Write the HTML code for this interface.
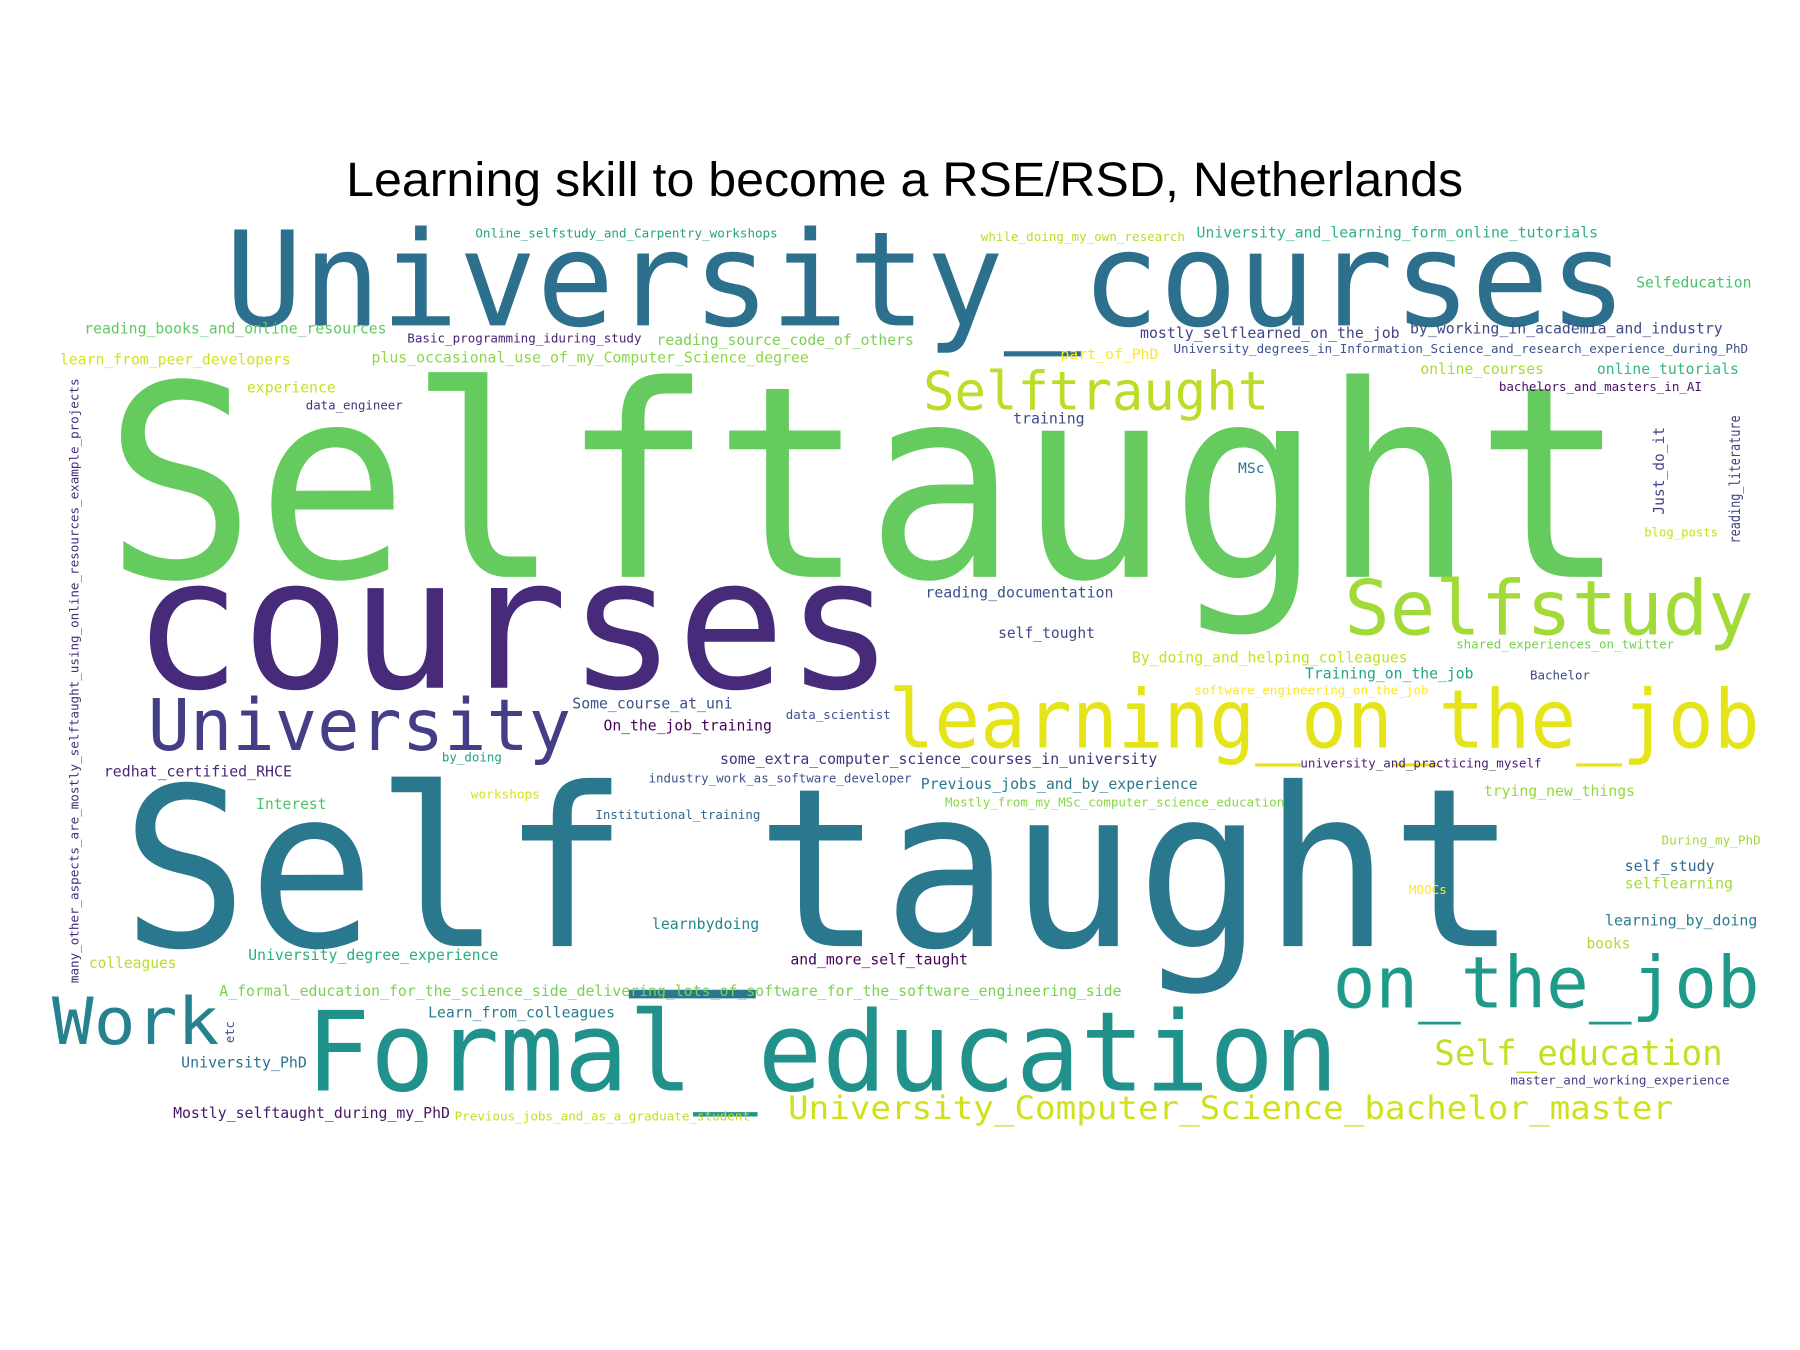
<!DOCTYPE html>
<html><head><meta charset="utf-8"><style>
html,body{margin:0;padding:0;background:#fff;}
svg{display:block}
text{font-family:"DejaVu Sans Mono","Liberation Mono",monospace;}
</style></head><body>
<svg width="1800" height="1350" viewBox="0 0 1560 1170" xmlns="http://www.w3.org/2000/svg">
<rect width="1560" height="1170" fill="#fff"/>
<text x="300" y="170" font-size="42" textLength="968" lengthAdjust="spacingAndGlyphs" style="font-family:'Liberation Sans',sans-serif" fill="#000">Learning skill to become a RSE/RSD, Netherlands</text>
<g lengthAdjust="spacingAndGlyphs">
<text x="195" y="282" font-size="114" textLength="1215" lengthAdjust="spacingAndGlyphs" fill="#2d708e">University_courses</text>
<text x="90" y="500" font-size="232" textLength="1320" lengthAdjust="spacingAndGlyphs" fill="#65cb5e">Selftaught</text>
<text x="115" y="596" font-size="158" textLength="660" lengthAdjust="spacingAndGlyphs" fill="#472a7a">courses</text>
<text x="1165" y="550" font-size="66" textLength="355" lengthAdjust="spacingAndGlyphs" fill="#a2da37">Selfstudy</text>
<text x="800" y="355" font-size="46" textLength="300" lengthAdjust="spacingAndGlyphs" fill="#bade28">Selftraught</text>
<text x="128" y="650" font-size="62" textLength="367" lengthAdjust="spacingAndGlyphs" fill="#433e85">University</text>
<text x="770" y="648" font-size="70" textLength="755" lengthAdjust="spacingAndGlyphs" fill="#e5e419">learning_on_the_job</text>
<text x="105" y="820" font-size="192" textLength="1210" lengthAdjust="spacingAndGlyphs" fill="#2a788e">Self_taught</text>
<text x="1155" y="873" font-size="62" textLength="370" lengthAdjust="spacingAndGlyphs" fill="#1f9a8a">on_the_job</text>
<text x="45" y="905" font-size="56" textLength="145" lengthAdjust="spacingAndGlyphs" fill="#26828e">Work</text>
<text x="265" y="945" font-size="96" textLength="895" lengthAdjust="spacingAndGlyphs" fill="#21918c">Formal_education</text>
<text x="1243" y="923" font-size="30" textLength="250" lengthAdjust="spacingAndGlyphs" fill="#c2df23">Self_education</text>
<text x="683" y="970" font-size="28" textLength="767" lengthAdjust="spacingAndGlyphs" fill="#d0e11c">University_Computer_Science_bachelor_master</text>

<text x="412" y="206" font-size="11" textLength="262" lengthAdjust="spacingAndGlyphs" fill="#27a082">Online_selfstudy_and_Carpentry_workshops</text>
<text x="850" y="209" font-size="11" textLength="177" lengthAdjust="spacingAndGlyphs" fill="#b5de2b">while_doing_my_own_research</text>
<text x="1037" y="206" font-size="13" textLength="348" lengthAdjust="spacingAndGlyphs" fill="#2db27d">University_and_learning_form_online_tutorials</text>
<text x="1418" y="249" font-size="13" textLength="100" lengthAdjust="spacingAndGlyphs" fill="#4ac16d">Selfeducation</text>
<text x="73" y="289" font-size="13" textLength="262" lengthAdjust="spacingAndGlyphs" fill="#5ec962">reading_books_and_online_resources</text>
<text x="353" y="297" font-size="11" textLength="203" lengthAdjust="spacingAndGlyphs" fill="#482475">Basic_programming_iduring_study</text>
<text x="569" y="299" font-size="13" textLength="223" lengthAdjust="spacingAndGlyphs" fill="#7ad151">reading_source_code_of_others</text>
<text x="988" y="293" font-size="13" textLength="225" lengthAdjust="spacingAndGlyphs" fill="#414487">mostly_selflearned_on_the_job</text>
<text x="1222" y="289" font-size="13" textLength="271" lengthAdjust="spacingAndGlyphs" fill="#3e4a89">by_working_in_academia_and_industry</text>
<text x="52" y="316" font-size="13" textLength="200" lengthAdjust="spacingAndGlyphs" fill="#d2e21b">learn_from_peer_developers</text>
<text x="322" y="314" font-size="13" textLength="379" lengthAdjust="spacingAndGlyphs" fill="#8fd744">plus_occasional_use_of_my_Computer_Science_degree</text>
<text x="919" y="311" font-size="12" textLength="85" lengthAdjust="spacingAndGlyphs" fill="#fde725">part_of_PhD</text>
<text x="1017" y="306" font-size="11" textLength="498" lengthAdjust="spacingAndGlyphs" fill="#3b528b">University_degrees_in_Information_Science_and_research_experience_during_PhD</text>
<text x="1231" y="324" font-size="13" textLength="107" lengthAdjust="spacingAndGlyphs" fill="#a8db34">online_courses</text>
<text x="1384" y="324" font-size="13" textLength="123" lengthAdjust="spacingAndGlyphs" fill="#35b779">online_tutorials</text>
<text x="1299" y="339" font-size="11" textLength="176" lengthAdjust="spacingAndGlyphs" fill="#471164">bachelors_and_masters_in_AI</text>
<text x="214" y="340" font-size="13" textLength="77" lengthAdjust="spacingAndGlyphs" fill="#c8e020">experience</text>
<text x="265" y="355" font-size="11" textLength="84" lengthAdjust="spacingAndGlyphs" fill="#46337e">data_engineer</text>
<text x="878" y="367" font-size="13" textLength="62" lengthAdjust="spacingAndGlyphs" fill="#3e4c8a">training</text>
<text x="1073" y="410" font-size="12" textLength="23" lengthAdjust="spacingAndGlyphs" fill="#2a788e">MSc</text>
<text transform="translate(1442,446) rotate(-90)" font-size="13" textLength="76" lengthAdjust="spacingAndGlyphs" fill="#414487">Just_do_it</text>
<text transform="translate(1508,471) rotate(-90)" font-size="13" textLength="111" lengthAdjust="spacingAndGlyphs" fill="#414487">reading_literature</text>
<text x="1425" y="465" font-size="11" textLength="64" lengthAdjust="spacingAndGlyphs" fill="#c8e020">blog_posts</text>
<text transform="translate(68,852) rotate(-90)" font-size="11" textLength="524" lengthAdjust="spacingAndGlyphs" fill="#472d7b">many_other_aspects_are_mostly_selftaught_using_online_resources_example_projects</text>
<text x="802" y="518" font-size="13" textLength="163" lengthAdjust="spacingAndGlyphs" fill="#3b528b">reading_documentation</text>
<text x="865" y="553" font-size="13" textLength="84" lengthAdjust="spacingAndGlyphs" fill="#3e4989">self_tought</text>
<text x="1262" y="562" font-size="11" textLength="189" lengthAdjust="spacingAndGlyphs" fill="#75d054">shared_experiences_on_twitter</text>
<text x="981" y="574" font-size="13" textLength="239" lengthAdjust="spacingAndGlyphs" fill="#c5e021">By_doing_and_helping_colleagues</text>
<text x="1131" y="588" font-size="13" textLength="146" lengthAdjust="spacingAndGlyphs" fill="#20a386">Training_on_the_job</text>
<text x="1326" y="589" font-size="11" textLength="52" lengthAdjust="spacingAndGlyphs" fill="#3e4a89">Bachelor</text>
<text x="1035" y="602" font-size="11" textLength="203" lengthAdjust="spacingAndGlyphs" fill="#fde725">software_engineering_on_the_job</text>
<text x="496" y="614" font-size="13" textLength="139" lengthAdjust="spacingAndGlyphs" fill="#3b528b">Some_course_at_uni</text>
<text x="523" y="633" font-size="13" textLength="146" lengthAdjust="spacingAndGlyphs" fill="#440154">On_the_job_training</text>
<text x="681" y="623" font-size="11" textLength="91" lengthAdjust="spacingAndGlyphs" fill="#3b528b">data_scientist</text>
<text x="90" y="673" font-size="13" textLength="163" lengthAdjust="spacingAndGlyphs" fill="#482878">redhat_certified_RHCE</text>
<text x="383" y="660" font-size="11" textLength="52" lengthAdjust="spacingAndGlyphs" fill="#1fa187">by_doing</text>
<text x="624" y="662" font-size="13" textLength="379" lengthAdjust="spacingAndGlyphs" fill="#46307e">some_extra_computer_science_courses_in_university</text>
<text x="1127" y="665" font-size="11" textLength="209" lengthAdjust="spacingAndGlyphs" fill="#481f70">university_and_practicing_myself</text>
<text x="562" y="678" font-size="11" textLength="228" lengthAdjust="spacingAndGlyphs" fill="#3b528b">industry_work_as_software_developer</text>
<text x="798" y="684" font-size="13" textLength="240" lengthAdjust="spacingAndGlyphs" fill="#2a788e">Previous_jobs_and_by_experience</text>
<text x="222" y="701" font-size="13" textLength="61" lengthAdjust="spacingAndGlyphs" fill="#4ac16d">Interest</text>
<text x="408" y="692" font-size="11" textLength="60" lengthAdjust="spacingAndGlyphs" fill="#d5e21a">workshops</text>
<text x="819" y="699" font-size="11" textLength="294" lengthAdjust="spacingAndGlyphs" fill="#8bd646">Mostly_from_my_MSc_computer_science_education</text>
<text x="1286" y="690" font-size="13" textLength="131" lengthAdjust="spacingAndGlyphs" fill="#95d840">trying_new_things</text>
<text x="516" y="710" font-size="11" textLength="143" lengthAdjust="spacingAndGlyphs" fill="#31688e">Institutional_training</text>
<text x="1440" y="732" font-size="11" textLength="86" lengthAdjust="spacingAndGlyphs" fill="#9fda3a">During_my_PhD</text>
<text x="1408" y="755" font-size="13" textLength="78" lengthAdjust="spacingAndGlyphs" fill="#31688e">self_study</text>
<text x="1408" y="770" font-size="13" textLength="94" lengthAdjust="spacingAndGlyphs" fill="#a5db36">selflearning</text>
<text x="1221" y="775" font-size="11" textLength="33" lengthAdjust="spacingAndGlyphs" fill="#fde725">MOOCs</text>
<text x="565" y="805" font-size="13" textLength="93" lengthAdjust="spacingAndGlyphs" fill="#24868e">learnbydoing</text>
<text x="1391" y="802" font-size="13" textLength="132" lengthAdjust="spacingAndGlyphs" fill="#287d8e">learning_by_doing</text>
<text x="1375" y="822" font-size="13" textLength="38" lengthAdjust="spacingAndGlyphs" fill="#addc30">books</text>
<text x="77" y="839" font-size="13" textLength="76" lengthAdjust="spacingAndGlyphs" fill="#b5de2b">colleagues</text>
<text x="215" y="832" font-size="13" textLength="217" lengthAdjust="spacingAndGlyphs" fill="#29af7f">University_degree_experience</text>
<text x="685" y="836" font-size="13" textLength="154" lengthAdjust="spacingAndGlyphs" fill="#440154">and_more_self_taught</text>
<text x="190" y="863" font-size="13" textLength="782" lengthAdjust="spacingAndGlyphs" fill="#7ad151">A_formal_education_for_the_science_side_delivering_lots_of_software_for_the_software_engineering_side</text>
<text x="371" y="882" font-size="13" textLength="162" lengthAdjust="spacingAndGlyphs" fill="#287c8e">Learn_from_colleagues</text>
<text transform="translate(203,904) rotate(-90)" font-size="11" textLength="19" lengthAdjust="spacingAndGlyphs" fill="#3e4989">etc</text>
<text x="157" y="925" font-size="13" textLength="109" lengthAdjust="spacingAndGlyphs" fill="#2c728e">University_PhD</text>
<text x="1309" y="940" font-size="11" textLength="190" lengthAdjust="spacingAndGlyphs" fill="#433e85">master_and_working_experience</text>
<text x="150" y="969" font-size="13" textLength="240" lengthAdjust="spacingAndGlyphs" fill="#481668">Mostly_selftaught_during_my_PhD</text>
<text x="394" y="971" font-size="11" textLength="256" lengthAdjust="spacingAndGlyphs" fill="#c0df25">Previous_jobs_and_as_a_graduate_student</text>
</g>
</svg>
</body></html>
